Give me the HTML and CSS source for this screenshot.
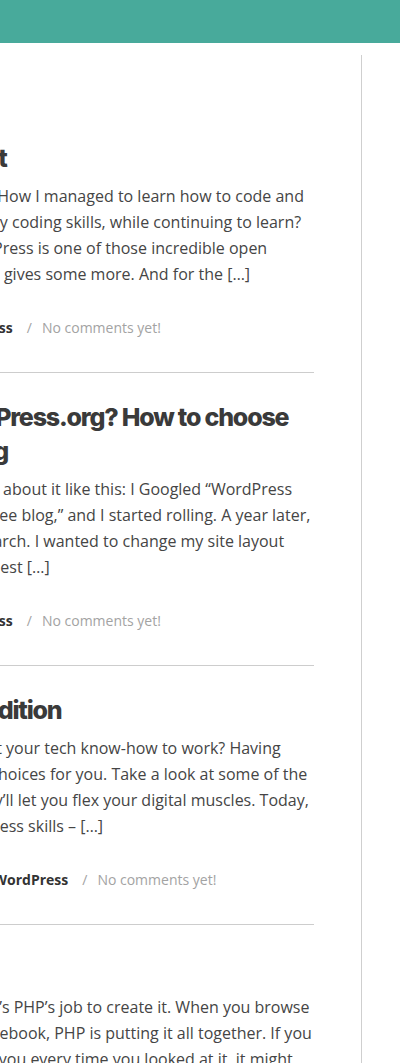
FILE: index.html
```html
<!DOCTYPE html>
<html lang="en">
<head>
<meta charset="utf-8">
<title>Blog</title>
<link rel="stylesheet" href="styles.css">
</head>
<body>
<header class="topbar"></header>
<div class="page">
  <main class="posts">
    <article class="post">
      <h2 class="post-title"><a href="#">My WordPress Coding Project</a></h2>
      <p class="excerpt">Have you ever wondered how I got started? How I managed to learn how to code and<br>And how, exactly, did I go on and improve my coding skills, while continuing to learn?<br>Well, the reason is very simple, really. WordPress is one of those incredible open<br>source software tools, that takes a lot, and it gives some more. And for the […]</p>
      <div class="meta"><span class="author">Written by Christina Barron in</span> <a class="cat" href="#">Tutorials, WordPress</a><span class="sep">/</span><a class="comments" href="#">No comments yet!</a></div>
    </article>
    <article class="post">
      <h2 class="post-title"><a href="#">Is it WordPress.com, or WordPress.org? How to choose<br>the best platform for your blog</a></h2>
      <p class="excerpt">not sure where you’d begin? Okay, just think about it like this: I Googled “WordPress<br>for beginners,” and then “how can I start a free blog,” and I started rolling. A year later,<br>I’d outgrown it; that’s when I began my research. I wanted to change my site layout<br>and find a premium theme that served me best […]</p>
      <div class="meta"><span class="author">Written by Christina Barron in</span> <a class="cat" href="#">Tutorials, WordPress</a><span class="sep">/</span><a class="comments" href="#">No comments yet!</a></div>
    </article>
    <article class="post">
      <h2 class="post-title"><a href="#">New WordPress Jobs: 2016 Edition</a></h2>
      <p class="excerpt">Looking for a fun new job where you can put your tech know-how to work? Having<br>The WordPress planet has plenty of career choices for you. Take a look at some of the<br>best WordPress jobs out there, because they’ll let you flex your digital muscles. Today,<br>we’ll show you how you will vet your WordPress skills – […]</p>
      <div class="meta"><span class="author">Written by Christina Barron in</span> <a class="cat" href="#">Jobs, Freelancing, WordPress</a><span class="sep">/</span><a class="comments" href="#">No comments yet!</a></div>
    </article>
    <article class="post">
      <h2 class="post-title"><a href="#">What Is PHP?</a></h2>
      <p class="excerpt">HTML is what any webpage is made of, yet it’s PHP’s job to create it. When you browse<br>a dynamic website like Twitter, Reddit or Facebook, PHP is putting it all together. If you<br>had to type the page by hand and send it to you every time you looked at it, it might<br>take forever to load, and nobody would want to wait that long for a page […]</p>
      <div class="meta"><span class="author">Written by Christina Barron in</span> <a class="cat" href="#">Development, WordPress</a><span class="sep">/</span><a class="comments" href="#">No comments yet!</a></div>
    </article>
  </main>
  <aside class="sidebar"></aside>
</div>
</body>
</html>
```
FILE: styles.css
```css
html {
  overflow: hidden;
}

body {
  margin: 0;
  background: #ffffff;
  font-family: "Open Sans", "Liberation Sans", sans-serif;
  color: #444444;
}

a {
  color: inherit;
  text-decoration: none;
}

.topbar {
  height: 43px;
  background: #48aa9b;
}

.page {
  display: flex;
  margin-left: -330px;
}

.posts {
  flex: 0 0 644px;
  padding-top: 71px;
}

.post {
  padding: 27px 0 34px;
  border-bottom: 1px solid #cdcdcd;
}

.post-title {
  margin: 0 0 8px;
  font-family: Inter, "DejaVu Sans", sans-serif;
  font-weight: 800;
  font-size: 25px;
  line-height: 34px;
  letter-spacing: -1.2px;
  color: #3a3a3a;
  white-space: nowrap;
}

.excerpt {
  margin: 0 0 31px;
  font-size: 16px;
  line-height: 26px;
  color: #454545;
  white-space: nowrap;
}

.meta {
  font-size: 14px;
  line-height: 20px;
  color: #a3a3a3;
  white-space: nowrap;
}

.author {
  color: #a3a3a3;
}

.cat {
  font-weight: 700;
  color: #333333;
}

.sep {
  margin: 0 10px 0 14px;
  color: #a3a3a3;
}

.comments {
  color: #a3a3a3;
}

.sidebar {
  flex: 0 0 300px;
  margin: 12px 0 0 47px;
  border-left: 1px solid #cfcfcf;
}
```
